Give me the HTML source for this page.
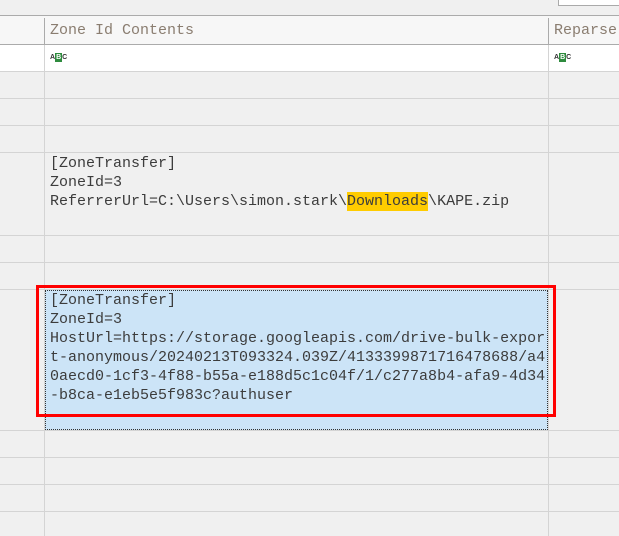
<!DOCTYPE html>
<html><head><style>
body{margin:0;width:619px;height:536px;background:#f0f0f0;position:relative;overflow:hidden;font-family:"Liberation Mono",monospace;}
.a{position:absolute;}
.h{left:0;width:619px;height:1px;background:#d4d4d4;}
.v{top:16px;width:2px;height:520px;background:#d4d4d4;}
.t{font-size:15px;line-height:19px;color:#3c3c3c;white-space:pre;letter-spacing:0}
.abc{font-size:7px;font-family:"Liberation Sans",sans-serif;color:#333;font-weight:bold}
.abc b{background:#2e8b3e;color:#fff;padding:1px 1px}
</style></head><body>
<div class="a" style="left:558px;top:0;width:61px;height:5px;background:#fff;border:1px solid #aaa;border-top:none;border-right:none"></div>
<div class="a" style="left:0;top:16px;width:619px;height:28px;background:#f7f7f7"></div>
<div class="a" style="left:0;top:15px;width:619px;height:1px;background:#ababab"></div>
<div class="a" style="left:0;top:44px;width:619px;height:1px;background:#ababab"></div>
<div class="a" style="left:0;top:45px;width:619px;height:26px;background:#fff"></div>
<div class="a t" style="left:50px;top:21px;font-size:15px;color:#8a7d70">Zone Id Contents</div>
<div class="a t" style="left:554px;top:21px;font-size:15px;color:#8a7d70">Reparse</div>
<div class="a abc" style="left:50px;top:54px">A<b>B</b>C</div>
<div class="a abc" style="left:554px;top:54px">A<b>B</b>C</div>
<div class="a h" style="top:71px"></div>
<div class="a h" style="top:98px"></div>
<div class="a h" style="top:125px"></div>
<div class="a h" style="top:152px"></div>
<div class="a h" style="top:235px"></div>
<div class="a h" style="top:262px"></div>
<div class="a h" style="top:289px"></div>
<div class="a h" style="top:430px"></div>
<div class="a h" style="top:457px"></div>
<div class="a h" style="top:484px"></div>
<div class="a h" style="top:511px"></div>
<div class="a v" style="left:44px;top:18px;background:#ababab;height:26px;width:1px"></div>
<div class="a v" style="left:548px;top:18px;background:#ababab;height:26px;width:1px"></div>
<div class="a v" style="left:44px;top:45px;width:1px;height:491px"></div>
<div class="a v" style="left:548px;top:45px;width:1px;height:491px"></div>
<div class="a" style="left:347px;top:192px;width:81px;height:19px;background:#ffcc00"></div>
<div class="a t" style="left:50px;top:154px">[ZoneTransfer]
ZoneId=3
ReferrerUrl=C:\Users\simon.stark\Downloads\KAPE.zip</div>
<div class="a" style="left:45px;top:290px;width:501px;height:138px;background:#cce4f7;border:1px dotted #333"></div>
<div class="a t" style="left:50px;top:291px">[ZoneTransfer]
ZoneId=3
HostUrl=https://storage.googleapis.com/drive-bulk-expor
t-anonymous/20240213T093324.039Z/4133399871716478688/a4
0aecd0-1cf3-4f88-b55a-e188d5c1c04f/1/c277a8b4-afa9-4d34
-b8ca-e1eb5e5f983c?authuser</div>
<div class="a" style="left:36px;top:285px;width:514px;height:126px;border:3px solid #f00"></div>
</body></html>
